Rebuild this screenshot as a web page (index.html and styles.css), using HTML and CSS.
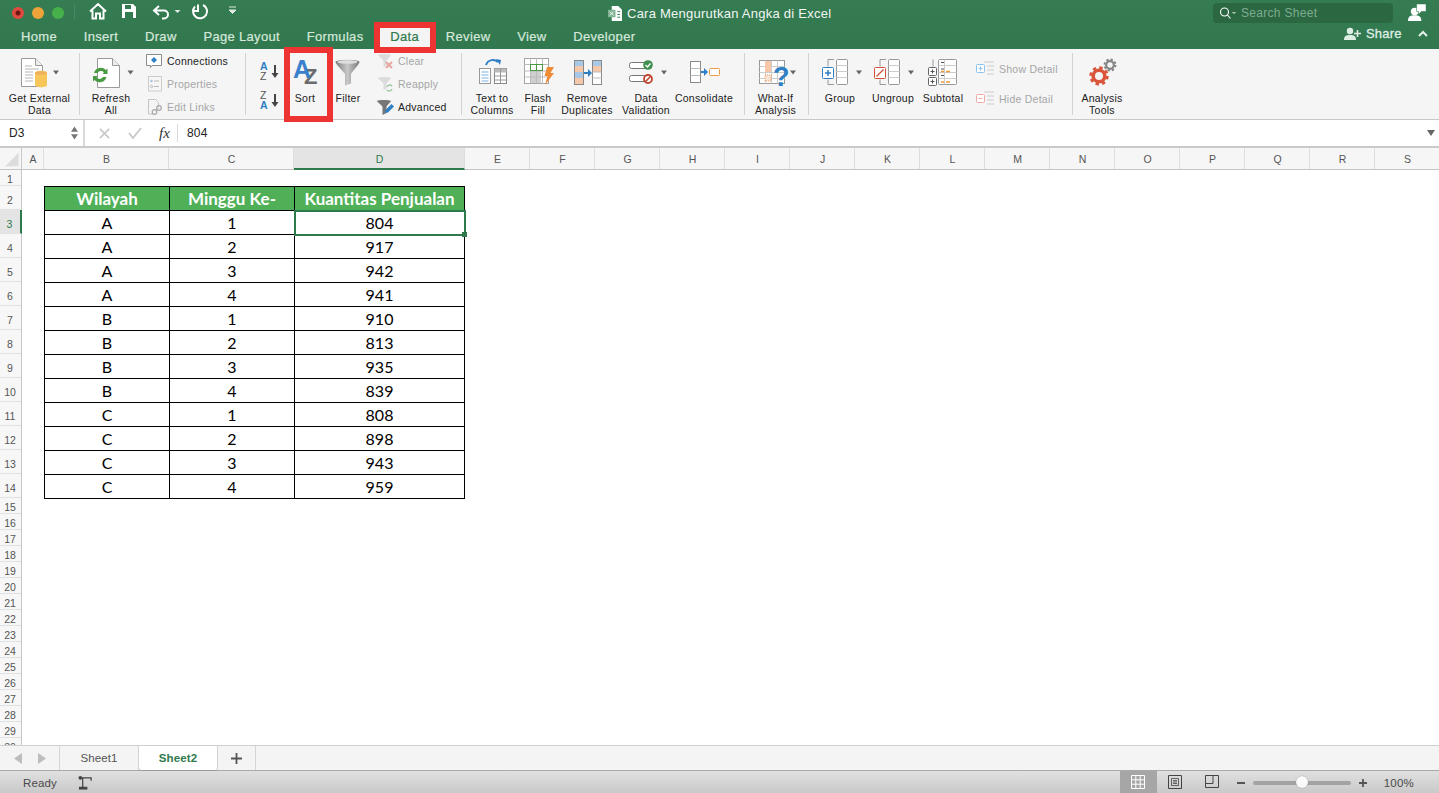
FILE: index.html
```html
<!DOCTYPE html>
<html lang="en">
<head>
<meta charset="utf-8">
<title>Cara Mengurutkan Angka di Excel</title>
<link rel="stylesheet" href="styles.css">
</head>
<body>
<div class="app">
  <header class="green">
    <div class="titlebar">
      <div class="lights"><i class="l r"></i><i class="l o"></i><i class="l g"></i></div>
      <div class="tsep"></div>
      <svg class="qat" viewBox="85 2 160 24">
        <path d="M94 13.500 102 6l8 7.500M96.500 12.500V20.500h3.500v-5h4v5h3.500v-8" fill="none" stroke="#fff" stroke-width="2"/>
        <path d="M126 6h11l3 3v11h-14z" fill="#fff"/><rect x="129" y="7" width="6" height="4" fill="#327a50"/><rect x="129" y="14" width="8" height="6" fill="#327a50"/>
        <path d="M163 8 158 12.500l5 4.500M158.500 12.500H168a4 4 0 0 1 0 8h-2" fill="none" stroke="#fff" stroke-width="2"/>
        <path d="M178.500 12h6l-3 3z" fill="#dfe9e2"/>
        <path d="M202 6.500v6.500h-5M199 8.500a7 7 0 1 0 8-1.500" fill="none" stroke="#fff" stroke-width="2"/>
        <path d="M233 9h7M233 12h7l-3.500 3.500z" fill="#dfe9e2" stroke="#dfe9e2"/>
      </svg>
      <div class="doc">
        <svg class="docicon" viewBox="0 0 15 16"><path d="M4 0h7l4 4v12H4z" fill="#fff"/><rect x="0" y="4" width="8" height="8" fill="#7fb394"/><path d="M2 6l4 4M6 6l-4 4" stroke="#fff"/><path d="M10 6h3M10 9h3M10 12h3" stroke="#327a50"/></svg>
        <span>Cara Mengurutkan Angka di Excel</span>
      </div>
      <div class="search">
        <svg class="sicon" viewBox="0 0 18 12"><circle cx="5.500" cy="5" r="4" fill="none" stroke="#fff" stroke-width="1.100"/><path d="M8.500 8l3 3.500" stroke="#fff" stroke-width="1.100"/><path d="M13.500 5l1.500 1.500L16.500 5" fill="none" stroke="#fff"/></svg>
        <span>Search Sheet</span>
      </div>
      <svg class="comment" viewBox="0 0 20 20"><circle cx="7" cy="9" r="4" fill="#fff"/><path d="M0 19c0-5 3-6 7-6s7 1 7 6z" fill="#fff"/><path d="M9 1h10v8h-5l-3 3V9H9z" fill="#fff" stroke="#327a50" stroke-width=".6"/></svg>
    </div>
    <div class="tabrow">
      <nav class="tabs">
        <span class="tab">Home</span><span class="tab">Insert</span><span class="tab">Draw</span><span class="tab">Page Layout</span><span class="tab">Formulas</span><span class="tab active">Data</span><span class="tab">Review</span><span class="tab">View</span><span class="tab">Developer</span>
      </nav>
      <div class="share">
        <svg class="shareicon" viewBox="0 0 17 13"><circle cx="6" cy="4" r="3.200" fill="#dfeee5"/><path d="M0 13c0-4 2-5 6-5s6 1 6 5z" fill="#dfeee5"/><path d="M13.500 3v7M10 6.500h7" stroke="#dfeee5" stroke-width="1.600"/></svg>
        <span>Share</span>
        <svg class="chev" viewBox="0 0 10 7"><path d="M1 6l4-4 4 4" fill="none" stroke="#e6f0ea" stroke-width="2"/></svg>
      </div>
    </div>
  </header>

  <section class="ribbon">
    <div class="grp g1">
      <div class="big w79">
        <svg viewBox="0 56 79 36">
          <path d="M21.500 58.500h14l7 7v21h-21z" fill="#fff" stroke="#9a9a9a"/><path d="M35.500 58.500v7h7" fill="#eee" stroke="#9a9a9a"/>
          <path d="M25 66h7M25 69h14M25 72h8M25 75h8M25 78h8M25 81h8" stroke="#b5b5b5"/>
          <path d="M35 73c0-3 12-3 12 0v12c0 3-12 3-12 0z" fill="#f6c658"/><ellipse cx="41" cy="73" rx="6" ry="1.800" fill="#eeb05a"/>
          <path d="M53 70.500h6l-3 4z" fill="#666"/>
        </svg>
        <div class="lbl">Get External<br>Data</div>
      </div>
    </div>
    <div class="grp g2">
      <div class="big w62">
        <svg viewBox="80 56 62 36">
          <path d="M97.500 58.500h15l7 7v22h-22z" fill="#fff" stroke="#9a9a9a"/><path d="M112.500 58.500v7h7" fill="#eee" stroke="#9a9a9a"/>
          <path d="M94 73a7 7 0 0 1 12-3l1.500-1.500V74h-5l1.500-1.500a4 4 0 0 0-6.500.5z" fill="#4a9a44"/><path d="M106.500 77a7 7 0 0 1-12 3l-1.500 1.500V76h5l-1.500 1.500a4 4 0 0 0 6.500-.5z" fill="#4a9a44"/>
          <path d="M127.500 70.500h6l-3 4z" fill="#666"/>
        </svg>
        <div class="lbl">Refresh<br>All</div>
      </div>
      <div class="smalls">
        <div class="sm"><svg viewBox="0 0 17 16"><path d="M.5 1.500h15v11H6l-1.500 2v-2H.5z" fill="#fff" stroke="#8b8b8b"/><path d="M8 4l3 3-3 3-3-3z" fill="#2f7fc4"/></svg><span>Connections</span></div>
        <div class="sm off"><svg viewBox="0 0 17 16"><rect x="2.500" y=".5" width="13" height="14.500" fill="#f6f6f6" stroke="#ccc"/><circle cx="5.500" cy="5" r="1.200" fill="#9cc4e4"/><circle cx="5.500" cy="10.500" r="1.200" fill="none" stroke="#bbb"/><path d="M8 5h5M8 10.500h5" stroke="#bbb"/></svg><span>Properties</span></div>
        <div class="sm off"><svg viewBox="0 0 17 16"><path d="M2.500.5h7l3 3V8M2.500.5V15H7" fill="none" stroke="#c4c4c4"/><circle cx="8.500" cy="13" r="2.300" fill="none" stroke="#aaa" stroke-width="1.200"/><circle cx="13" cy="9" r="2.300" fill="none" stroke="#aaa" stroke-width="1.200"/><path d="M9.500 12l3-2.500" stroke="#aaa"/></svg><span>Edit Links</span></div>
      </div>
    </div>
    <div class="grp g3">
      <div class="azcol">
        <svg viewBox="0 0 22 20"><text x="0" y="9" class="sa">A</text><text x="0" y="19" class="sz">Z</text><path d="M15 4v10" stroke="#444" stroke-width="2"/><path d="M11.500 12h7L15 17z" fill="#444"/></svg>
        <svg viewBox="0 0 22 20"><text x="0" y="9" class="sz">Z</text><text x="0" y="19" class="sa">A</text><path d="M15 4v10" stroke="#444" stroke-width="2"/><path d="M11.500 12h7L15 17z" fill="#444"/></svg>
      </div>
      <div class="big w37 boxed">
        <svg viewBox="290 56 37 36"><text x="304" y="84" class="bigzz">Z</text><text x="293" y="78" class="biga">A</text></svg>
        <div class="lbl">Sort</div>
      </div>
      <div class="big w30 ml6">
        <svg viewBox="333 56 30 36">
          <defs><linearGradient id="fun" x1="0" x2="1" y1="0" y2="0"><stop offset="0" stop-color="#7d7d7d"/><stop offset=".5" stop-color="#c8c8c8"/><stop offset="1" stop-color="#777"/></linearGradient></defs>
          <path d="M335.500 62c0-3 24-3 24 0 0 2-7 9-8.500 12v9.500l-6 2V74c-2-3-9.500-10-9.500-12z" fill="url(#fun)"/><ellipse cx="347.500" cy="62" rx="10" ry="1.800" fill="#ddd"/>
        </svg>
        <div class="lbl">Filter</div>
      </div>
      <div class="smalls ml14">
        <div class="sm off"><svg viewBox="0 0 17 16"><path d="M1 2c0-1.500 13-1.500 13 0 0 1-4 4-4.500 6v5l-3 1V8C6 6 1 3 1 2z" fill="#dcdcdc"/><path d="M9 9l6 6M15 9l-6 6" stroke="#e7a6a0" stroke-width="2"/></svg><span>Clear</span></div>
        <div class="sm off"><svg viewBox="0 0 17 16"><path d="M1 2c0-1.500 13-1.500 13 0 0 1-4 4-4.500 6v5l-3 1V8C6 6 1 3 1 2z" fill="#dcdcdc"/><path d="M10 11a3 3 0 0 1 5-1M15 13a3 3 0 0 1-5 1" fill="none" stroke="#9cc9a0" stroke-width="1.400"/></svg><span>Reapply</span></div>
        <div class="sm"><svg viewBox="0 0 17 16"><path d="M0 2c0-1.500 14-1.500 14 0 0 1-4 4-4.500 6v6l-4 2V8C5 6 0 3 0 2z" fill="#777"/><path d="M8 14l.5-3 6-6 2.500 2.500-6 6z" fill="#2f7fc4"/></svg><span>Advanced</span></div>
      </div>
    </div>
    <div class="grp g4">
      <div class="big w60">
        <svg viewBox="462 56 60 36">
          <path d="M486 65c2-6 9-6 12-3" fill="none" stroke="#2f7fc4" stroke-width="2"/><path d="M496 59l5 1-1 5z" fill="#2f7fc4"/>
          <rect x="479.500" y="68.500" width="11" height="15" fill="#fff" stroke="#999"/><path d="M481.500 72h7M481.500 75h7M481.500 78h7M481.500 81h7" stroke="#7fb4df"/>
          <rect x="494.500" y="68.500" width="12" height="15" fill="#fff" stroke="#888"/><rect x="494.500" y="68.500" width="12" height="4" fill="#bbb"/><path d="M500.500 68.500v15M494.500 76h12M494.500 80h12" stroke="#999"/>
        </svg>
        <div class="lbl">Text to<br>Columns</div>
      </div>
      <div class="big w32">
        <svg viewBox="522 56 32 36">
          <rect x="524.500" y="58.500" width="24" height="25" fill="#fff" stroke="#a5a5a5"/><rect x="530" y="71" width="11" height="12" fill="#cfcfcf"/>
          <path d="M530.500 58.500v25M536.500 58.500v25M542.500 58.500v25M524.500 64.500h24M524.500 71h24M524.500 77h24" stroke="#bbb" fill="none"/>
          <rect x="530.500" y="64.500" width="12" height="6" fill="#fff" stroke="#4a9a44"/><path d="M536.500 64.500v6" stroke="#4a9a44"/>
          <path d="M547 67h7l-3.500 6h3.500l-9 12 2.500-9h-3z" fill="#ef8a35"/>
        </svg>
        <div class="lbl">Flash<br>Fill</div>
      </div>
      <div class="big w66">
        <svg viewBox="554 56 66 36">
          <rect x="574.500" y="60.500" width="9" height="24" fill="#fff" stroke="#888"/><rect x="575" y="61" width="8" height="5" fill="#a8c8e8"/><rect x="575" y="66" width="8" height="6" fill="#f6c7a8"/><rect x="575" y="72" width="8" height="6" fill="#a8c8e8"/><rect x="575" y="78" width="8" height="6" fill="#f6c7a8"/>
          <path d="M584 73h5" stroke="#2f7fc4" stroke-width="2"/><path d="M588 69l4 4-4 4z" fill="#2f7fc4"/>
          <rect x="592.500" y="60.500" width="9" height="24" fill="#fff" stroke="#888"/><rect x="593" y="61" width="8" height="5" fill="#a8c8e8"/><rect x="593" y="66" width="8" height="6" fill="#f6c7a8"/>
          <path d="M592.500 72h9M592.500 78h9" stroke="#bbb"/>
        </svg>
        <div class="lbl">Remove<br>Duplicates</div>
      </div>
      <div class="big w52">
        <svg viewBox="620 56 52 36">
          <rect x="629.500" y="62.500" width="20" height="6" rx="2" fill="#fff" stroke="#777"/><rect x="629.500" y="75.500" width="20" height="6" rx="2" fill="#fff" stroke="#777"/>
          <circle cx="648" cy="65" r="4.800" fill="#3f8f4f"/><path d="M645.500 65l2 2 3-3.500" fill="none" stroke="#fff" stroke-width="1.400"/>
          <circle cx="648" cy="79" r="4" fill="#fff" stroke="#c0442f" stroke-width="1.800"/><path d="M645.500 81.500l5-5" stroke="#c0442f" stroke-width="1.600"/>
          <path d="M661 70.500h6l-3 4z" fill="#666"/>
        </svg>
        <div class="lbl">Data<br>Validation</div>
      </div>
      <div class="big w64">
        <svg viewBox="672 56 64 36">
          <rect x="690.500" y="61.500" width="10" height="21" fill="#fff" stroke="#8a8a8a"/><path d="M690.500 68.500h10M690.500 75.500h10" stroke="#bbb"/>
          <path d="M701 72h4" stroke="#2f7fc4" stroke-width="2"/><path d="M704 68l4 4-4 4z" fill="#2f7fc4"/>
          <rect x="709.500" y="68.500" width="10" height="7" rx="1" fill="#fff" stroke="#ef9a45"/>
        </svg>
        <div class="lbl">Consolidate</div>
      </div>
    </div>
    <div class="grp g5">
      <div class="big w61">
        <svg viewBox="745 56 61 36">
          <rect x="759.500" y="60.500" width="25" height="23" fill="#fff" stroke="#999"/><path d="M765.500 60.500v23M771.500 60.500v23M777.500 60.500v23M759.500 66.500h25M759.500 72.500h25M759.500 78.500h25" stroke="#ccc"/>
          <rect x="765" y="61" width="6" height="11" fill="#f6c7a8"/><rect x="765" y="75" width="6" height="6" fill="#fbe3d3" stroke="#ef9a65" stroke-dasharray="1 1"/>
          <text x="773" y="86" class="q">?</text>
          <path d="M790 70.500h6l-3 4z" fill="#666"/>
        </svg>
        <div class="lbl">What-If<br>Analysis</div>
      </div>
    </div>
    <div class="grp g6">
      <div class="big w62">
        <svg viewBox="809 56 62 36">
          <path d="M834 59.500h-6v7M828 79.500v5h6" fill="none" stroke="#999"/><rect x="836.500" y="59.500" width="11" height="25" rx="1" fill="#fff" stroke="#999"/><path d="M836.500 65.500h11M836.500 71.500h11M836.500 77.500h11" stroke="#ccc"/>
          <rect x="822.500" y="67.500" width="11" height="11" rx="1" fill="#fff" stroke="#2f7fc4"/><path d="M825 73h6M828 70v6" stroke="#2f7fc4" stroke-width="1.500"/>
          <path d="M856 70.500h6l-3 4z" fill="#666"/>
        </svg>
        <div class="lbl">Group</div>
      </div>
      <div class="big w44">
        <svg viewBox="871 56 44 36">
          <path d="M886 59.500h-6v7M880 79.500v5h6" fill="none" stroke="#999"/><rect x="888.500" y="59.500" width="11" height="25" rx="1" fill="#fff" stroke="#999"/><path d="M888.500 65.500h11M888.500 71.500h11M888.500 77.500h11" stroke="#ccc"/>
          <rect x="874.500" y="67.500" width="11" height="11" rx="1" fill="#fff" stroke="#d0523d"/><path d="M876.500 76.500l7-7" stroke="#d0523d" stroke-width="1.300"/>
          <path d="M908 70.500h6l-3 4z" fill="#666"/>
        </svg>
        <div class="lbl">Ungroup</div>
      </div>
      <div class="big w56">
        <svg viewBox="915 56 56 36">
          <path d="M933 59.500v7M933 77v7" stroke="#999"/><rect x="928.500" y="67.500" width="8" height="8" rx="1" fill="#fff" stroke="#666"/><rect x="928.500" y="77.500" width="8" height="8" rx="1" fill="#fff" stroke="#666"/><path d="M930.500 71.500h4M932.500 69.500v4M930.500 81.500h4M932.500 79.500v4" stroke="#555"/>
          <rect x="938.500" y="59.500" width="18" height="25" rx="1" fill="#fff" stroke="#999"/><path d="M938.500 65.500h18M938.500 72.500h18M938.500 78.500h18M944.500 59.500v25" stroke="#ccc"/>
          <path d="M941 62.500h3M941 69h3M941 75.500h3" stroke="#555"/><path d="M941 71.500h3M946 71.500h4M941 82h3M946 82h4" stroke="#ef9a35" stroke-width="1.400"/>
        </svg>
        <div class="lbl">Subtotal</div>
      </div>
      <div class="smalls two ml5">
        <div class="sm off wide"><svg viewBox="0 0 19 16"><rect x=".5" y="3.500" width="8" height="8" rx="1" fill="#fff" stroke="#8cc4f0"/><path d="M2.500 7.500h4M4.500 5.500v4" stroke="#8cc4f0"/><path d="M8 1h10M11 5h7M11 9h7M11 13h7" stroke="#ccc"/></svg><span>Show Detail</span></div>
        <div class="sm off wide"><svg viewBox="0 0 19 16"><rect x=".5" y="3.500" width="8" height="8" rx="1" fill="#fff" stroke="#eeaaa5"/><path d="M2.500 7.500h4" stroke="#eeaaa5"/><path d="M8 1h10M11 5h7M11 9h7M11 13h7" stroke="#ccc"/></svg><span>Hide Detail</span></div>
      </div>
    </div>
    <div class="grp g7">
      <div class="big w58">
        <svg viewBox="1073 56 58 36">
          <circle cx="1110" cy="65" r="3.800" fill="none" stroke="#858585" stroke-width="2.200"/><circle cx="1110" cy="65" r="5.500" fill="none" stroke="#858585" stroke-width="2" stroke-dasharray="2.300 2"/>
          <circle cx="1099" cy="76" r="5.800" fill="none" stroke="#d9563a" stroke-width="3.600"/><circle cx="1099" cy="76" r="8.400" fill="none" stroke="#d9563a" stroke-width="2.600" stroke-dasharray="3.400 3.200"/>
        </svg>
        <div class="lbl">Analysis<br>Tools</div>
      </div>
    </div>
  </section>

  <section class="fbar">
    <div class="namebox"><span>D3</span><svg class="updown" viewBox="0 0 8 15"><path d="M0 6h8L4 0zM0 9h8l-4 6z" fill="#777"/></svg></div>
    <div class="fbtns">
      <svg class="fx-x" viewBox="0 0 12 12"><path d="M1 1l10 10M11 1L1 11" stroke="#c8c8c8" stroke-width="1.800"/></svg>
      <svg class="fx-c" viewBox="0 0 14 12"><path d="M1 6l4 5 8-10" fill="none" stroke="#c8c8c8" stroke-width="1.800"/></svg>
      <span class="fx">fx</span>
    </div>
    <div class="fval">804</div>
    <svg class="fdrop" viewBox="0 0 8 6"><path d="M0 0h8L4 6z" fill="#666"/></svg>
  </section>

  <section class="colhead">
    <div class="corner"><svg viewBox="0 0 22 22"><path d="M19 5v14H5z" fill="#dcdcdc"/></svg></div>
    <div class="ch ca">A</div><div class="ch cb">B</div><div class="ch cb">C</div><div class="ch cd on">D</div>
    <div class="ch">E</div><div class="ch">F</div><div class="ch">G</div><div class="ch">H</div><div class="ch">I</div><div class="ch">J</div><div class="ch">K</div><div class="ch">L</div><div class="ch">M</div><div class="ch">N</div><div class="ch">O</div><div class="ch">P</div><div class="ch">Q</div><div class="ch">R</div><div class="ch">S</div>
  </section>

  <section class="sheet">
    <div class="rowhead">
      <div class="rh">1</div><div class="rh tall">2</div><div class="rh tall on">3</div><div class="rh tall">4</div><div class="rh tall">5</div><div class="rh tall">6</div><div class="rh tall">7</div><div class="rh tall">8</div><div class="rh tall">9</div><div class="rh tall">10</div><div class="rh tall">11</div><div class="rh tall">12</div><div class="rh tall">13</div><div class="rh tall">14</div>
      <div class="rh">15</div><div class="rh">16</div><div class="rh">17</div><div class="rh">18</div><div class="rh">19</div><div class="rh">20</div><div class="rh">21</div><div class="rh">22</div><div class="rh">23</div><div class="rh">24</div><div class="rh">25</div><div class="rh">26</div><div class="rh">27</div><div class="rh">28</div><div class="rh">29</div><div class="rh">30</div>
    </div>
    <div class="cells">
      <table class="data">
        <thead><tr><th>Wilayah</th><th>Minggu Ke-</th><th>Kuantitas Penjualan</th></tr></thead>
        <tbody>
          <tr><td>A</td><td>1</td><td class="sel">804</td></tr>
          <tr><td>A</td><td>2</td><td>917</td></tr>
          <tr><td>A</td><td>3</td><td>942</td></tr>
          <tr><td>A</td><td>4</td><td>941</td></tr>
          <tr><td>B</td><td>1</td><td>910</td></tr>
          <tr><td>B</td><td>2</td><td>813</td></tr>
          <tr><td>B</td><td>3</td><td>935</td></tr>
          <tr><td>B</td><td>4</td><td>839</td></tr>
          <tr><td>C</td><td>1</td><td>808</td></tr>
          <tr><td>C</td><td>2</td><td>898</td></tr>
          <tr><td>C</td><td>3</td><td>943</td></tr>
          <tr><td>C</td><td>4</td><td>959</td></tr>
        </tbody>
      </table>
    </div>
  </section>

  <section class="tabsbar">
    <div class="nav"><svg viewBox="0 0 9 11"><path d="M8 0v11L0 5.500z" fill="#bdbdbd"/></svg><svg viewBox="0 0 9 11"><path d="M0 0v11l8-5.500z" fill="#bdbdbd"/></svg></div>
    <div class="stab">Sheet1</div>
    <div class="stab cur">Sheet2</div>
    <div class="addtab"><svg viewBox="0 0 11 11"><path d="M5.500 0v11M0 5.500h11" stroke="#555" stroke-width="1.800"/></svg></div>
  </section>

  <footer class="status">
    <span class="ready">Ready</span>
    <svg class="macro" viewBox="0 0 16 16"><circle cx="2.500" cy="2.500" r="2" fill="#444"/><path d="M3 2.500h11v3M5 2.500V13" fill="none" stroke="#444" stroke-width="1.300"/><rect x="1" y="12" width="9" height="3" fill="#444"/></svg>
    <div class="views">
      <div class="view cur"><svg viewBox="0 0 14 14"><path d="M.5.5h13v13H.5zM.5 4.800h13M.5 9.200h13M4.800.5v13M9.200.5v13" fill="none" stroke="#fff"/></svg></div>
      <div class="view"><svg viewBox="0 0 14 14"><path d="M.5.5h13v13H.5z" fill="none" stroke="#444"/><path d="M3.500 3.500h7v7h-7zM5 5.500h4M5 7h4M5 8.500h4" fill="none" stroke="#444" stroke-width=".8"/></svg></div>
      <div class="view"><svg viewBox="0 0 14 14"><path d="M.5.500h13v12H.5zM.5 8.500h7.500V.5" fill="none" stroke="#444"/></svg></div>
    </div>
    <svg class="zm" viewBox="0 0 8 2"><path d="M0 1h8" stroke="#555" stroke-width="2"/></svg>
    <div class="slider"><i class="thumb"></i></div>
    <svg class="zp" viewBox="0 0 8 8"><path d="M0 4h8M4 0v8" stroke="#555" stroke-width="1.800"/></svg>
    <span class="pct">100%</span>
  </footer>
</div>
</body>
</html>
```
FILE: styles.css
```css
* { box-sizing: border-box; }
html, body { margin: 0; padding: 0; height: 793px; overflow: hidden; background: #fff; }
body { font-family: "Liberation Sans", Arial, sans-serif; color: #222; }
svg { display: block; }
.app { width: 1439px; height: 793px; display: flex; flex-direction: column; overflow: hidden; }

/* green header */
.green { height: 49px; background: linear-gradient(#367c52, #32784e); color: #fff; }
.titlebar { height: 24px; position: relative; display: flex; align-items: center; }
.lights { display: flex; gap: 8px; padding-left: 12px; padding-top: 2px; }
.l { width: 12px; height: 12px; border-radius: 50%; display: block; }
.l.r { background: radial-gradient(circle, #6a1712 0 2px, #e0493f 3px); }
.l.o { background: #eea33a; }
.l.g { background: #46b04a; }
.tsep { width: 1px; height: 16px; background: #46886a; margin-left: 10px; }
.qat { width: 160px; height: 24px; margin-left: 6px; }
.doc { position: absolute; left: 608px; top: 6px; display: flex; align-items: center; gap: 5px; font-size: 13px; letter-spacing: .25px; color: #f1f6f3; }
.docicon { width: 14px; height: 15px; }
.search { position: absolute; left: 1213px; top: 3px; width: 180px; height: 20px; background: #2b6842; border-radius: 4px; display: flex; align-items: center; padding-left: 6px; gap: 4px; font-size: 12px; letter-spacing: .3px; color: #7eab90; }
.sicon { width: 18px; height: 12px; }
.comment { position: absolute; left: 1408px; top: 3px; width: 19px; height: 19px; }
.tabrow { height: 25px; position: relative; }
.tabs { display: flex; gap: 26.800px; padding-left: 21px; padding-top: 1px; font-size: 13px; font-weight: 400; letter-spacing: .32px; color: #d6e8dc; line-height: 24px; -webkit-text-stroke: .2px #d6e8dc; }
.tab { position: relative; }
.tab.active { color: #2f7a4d; -webkit-text-stroke: .2px #2f7a4d; z-index: 0; }
.tab.active::before { content: ""; position: absolute; z-index: -1; left: -10px; right: -11px; top: 3px; bottom: 2px; background: #f4f4f4; outline: 6px solid #ee3333; }
.share { position: absolute; left: 1344px; top: 2px; display: flex; align-items: center; font-size: 13px; font-weight: 700; color: #dfeee5; }
.share span { margin-left: 5px; font-weight: 400; -webkit-text-stroke: .3px #dfeee5; letter-spacing: .2px; }
.shareicon { width: 17px; height: 13px; }
.chev { width: 10px; height: 7px; margin-left: 16px; }

/* ribbon */
.ribbon { height: 71px; padding-top: 4px; display: flex; align-items: flex-start; background: #f5f5f5; border-bottom: 1px solid #c8c8c8; }
.grp { height: 62px; display: flex; border-right: 1px solid #d2d2d2; flex: none; }
.g1 { width: 80px; }
.g2 { width: 166px; }
.g3 { width: 216px; }
.g4 { width: 283px; }
.g5 { width: 64px; }
.g6 { width: 264px; }
.g7 { border-right: 0; }
.big { padding-top: 3px; flex: none; text-align: center; }
.big svg { width: 100%; height: 36px; }
.lbl { font-size: 10.500px; line-height: 12px; letter-spacing: .25px; color: #222; white-space: nowrap; }
.w79 { width: 79px; } .w62 { width: 62px; } .w37 { width: 37px; } .w30 { width: 30px; }
.w60 { width: 60px; } .w32 { width: 32px; } .w66 { width: 66px; } .w52 { width: 52px; }
.w64 { width: 64px; } .w61 { width: 61px; } .w44 { width: 44px; } .w56 { width: 56px; } .w58 { width: 58px; }
.ml6 { margin-left: 6px; }
.boxed { height: 63px; background: #f5f5f5; outline: 6px solid #ee3333; position: relative; z-index: 2; }
.boxed .lbl { padding-right: 7px; }
.smalls { display: flex; flex-direction: column; gap: 7px; margin-left: 4px; }
.smalls.ml14 { margin-left: 14px; }
.smalls.ml5 { margin-left: 5px; }
.smalls.two { gap: 14px; padding-top: 8px; }
.sm { height: 16px; display: flex; align-items: center; gap: 4px; font-size: 10.500px; letter-spacing: .25px; white-space: nowrap; }
.sm svg { width: 17px; height: 16px; flex: none; }
.sm.wide svg { width: 19px; }
.sm.off { color: #a6a6a6; }
.azcol { width: 44px; padding: 8px 0 0 14px; display: flex; flex-direction: column; gap: 9px; }
.azcol svg { width: 22px; height: 20px; }
.sa { font: 700 10.500px "Liberation Sans", sans-serif; fill: #2f7fc4; }
.sz { font: 400 10.500px "Liberation Sans", sans-serif; fill: #555; }
.biga { font: 700 25px "Liberation Sans", sans-serif; fill: #3a80cc; }
.bigzz { font: 700 22px "Liberation Sans", sans-serif; fill: #6b6b6b; }
.q { font: 700 27px "Liberation Sans", sans-serif; fill: #2f7fc4; }

/* formula bar */
.fbar { height: 28px; display: flex; align-items: center; background: #fff; border-bottom: 2px solid #c9c9c9; position: relative; font-size: 12px; }
.namebox { width: 85px; height: 26px; display: flex; align-items: center; justify-content: space-between; padding: 0 5px 0 9px; border-right: 2px solid #d9d9d9; color: #222; }
.updown { width: 7px; height: 14px; }
.fbtns { width: 102px; height: 26px; display: flex; align-items: center; position: relative; border-right: 0; }
.fx-x { width: 11px; height: 11px; margin-left: 14px; }
.fx-c { width: 14px; height: 12px; margin-left: 18px; }
.fx { font: italic 15px "Liberation Serif", serif; margin-left: 17px; color: #333; padding-right: 7px; border-right: 1px solid #d9d9d9; line-height: 18px; }
.fval { flex: 1; letter-spacing: .2px; }
.fdrop { width: 8px; height: 6px; margin-right: 4px; }

/* column headers */
.colhead { height: 22px; display: flex; background: #f6f6f6; border-bottom: 1px solid #c4c4c4; flex: none; font-size: 10.500px; color: #555; }
.corner { width: 22px; border-right: 1px solid #c8c8c8; }
.corner svg { width: 22px; height: 21px; }
.ch { width: 65px; flex: none; text-align: center; line-height: 23px; padding-left: 1px; border-right: 1px solid #dedede; }
.ch.ca { width: 22px; }
.ch.cb { width: 125px; }
.ch.cd { width: 171px; }
.ch.on { background: #e4e4e4; color: #2f7a4d; border-bottom: 2px solid #2f7a4d; height: 22px; }

/* sheet */
.sheet { flex: none; height: 575px; display: flex; overflow: hidden; background: #fff; }
.rowhead { width: 22px; flex: none; background: #f7f7f7; border-right: 1px solid #c8c8c8; font-size: 10.500px; color: #555; }
.rh { height: 16px; line-height: 18px; text-align: center; border-bottom: 1px solid #e2e2e2; padding-right: 1px; }
.rh.tall { height: 24px; line-height: 28px; }
.rh.on { background: #e4e4e4; color: #2f7a4d; border-right: 2px solid #2f7a4d; width: 22px; }
.cells { flex: 1; padding: 16px 0 0 22px; }
.data { width: 421px; border-collapse: collapse; table-layout: fixed; font-family: Lato, sans-serif; font-size: 16px; color: #000; }
.data th, .data td { border: 1px solid #000; height: 24px; padding: 1px 0 0; text-align: center; line-height: 22px; }
.data th { background: #4fb058; color: #fff; font-weight: 700; font-size: 17px; padding-top: 0; }
.data th:nth-child(1), .data th:nth-child(2) { width: 125px; }
.data .sel { position: relative; outline: 2px solid #2f7a4d; outline-offset: -1px; }
.data .sel::after { content: ""; position: absolute; right: -3px; bottom: -3px; width: 5px; height: 5px; background: #2f7a4d; border: 0; }

/* sheet tabs */
.tabsbar { height: 26px; flex: none; display: flex; background: #f4f4f4; border-top: 1px solid #cfcfcf; border-bottom: 1px solid #a9a9a9; font-size: 11.500px; color: #555; }
.nav { width: 60px; display: flex; align-items: center; gap: 15px; padding-left: 14px; border-right: 1px solid #d4d4d4; }
.nav svg { width: 9px; height: 11px; }
.stab { width: 79px; text-align: center; line-height: 24px; letter-spacing: .1px; border-right: 1px solid #d4d4d4; }
.stab.cur { background: #fff; color: #2f7a4d; font-weight: 700; border-radius: 0 0 3px 3px; border-bottom: 1px solid #999; height: 25px; }
.addtab { width: 38px; display: flex; align-items: center; justify-content: center; border-right: 1px solid #d4d4d4; }
.addtab svg { width: 11px; height: 11px; }

/* status */
.status { height: 22px; flex: none; display: flex; align-items: center; padding-top: 1px; background: linear-gradient(#e0e0e0, #c9c9c9); font-size: 11.500px; color: #4a4a4a; }
.ready { margin-left: 23px; letter-spacing: .1px; }
.macro { width: 15px; height: 16px; margin-left: 21px; }
.views { display: flex; margin-left: 1027px; height: 22px; margin-top: -1px; }
.view { width: 37px; height: 22px; display: flex; align-items: center; justify-content: center; }
.view svg { width: 14px; height: 14px; }
.view.cur { background: #a6a6a6; }
.zm { width: 8px; height: 2px; margin-left: 6px; }
.slider { width: 98px; height: 4px; border-radius: 2px; background: #a3a3a3; margin-left: 8px; position: relative; }
.thumb { position: absolute; left: 43px; top: -4.500px; width: 12px; height: 12px; border-radius: 50%; background: #fafafa; box-shadow: 0 0 1px #777; }
.zp { width: 8px; height: 8px; margin-left: 8px; }
.pct { margin-left: 17px; letter-spacing: .2px; }
```
